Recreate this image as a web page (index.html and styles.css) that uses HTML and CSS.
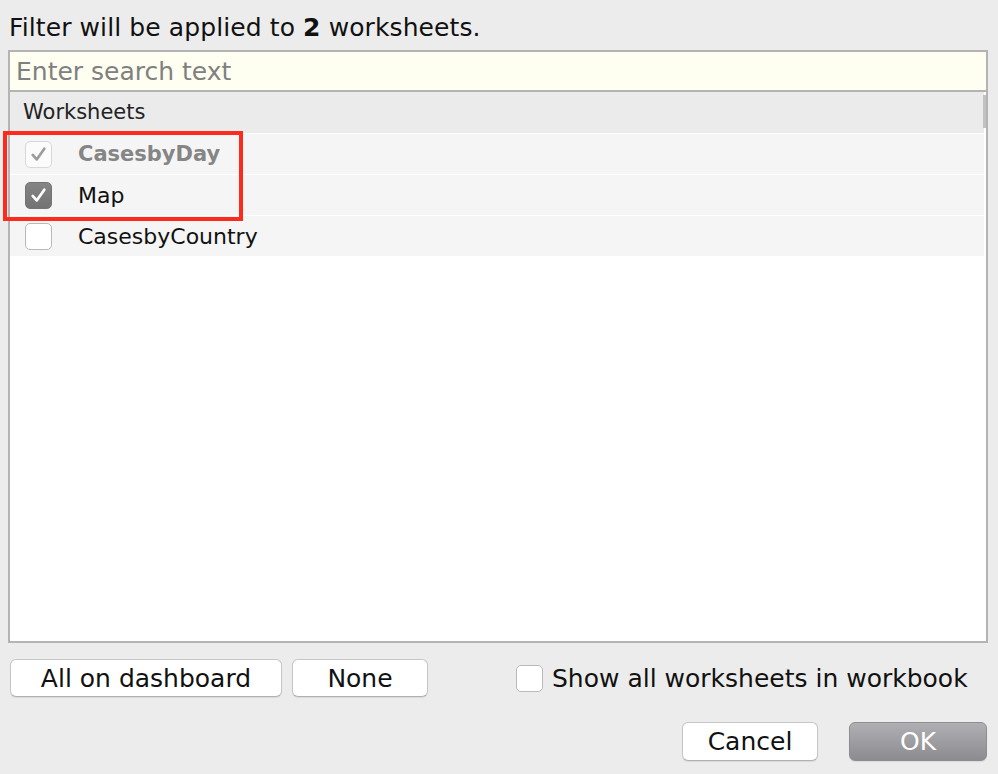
FILE: index.html
```html
<!DOCTYPE html>
<html>
<head>
    <title>Apply to Worksheets</title>
    <link rel="stylesheet" href="styles.css">
</head>
<body>

<div class="dialog">

<p class="summary">Filter will be applied to <b>2</b> worksheets.</p>

<div class="picker">
    <input class="search" type="text" placeholder="Enter search text">
    <div class="list">
        <div class="list-head">
            Worksheets
            <span class="thumb"></span>
        </div>
        <div class="rows">
            <div class="marked"></div>
            <label class="row disabled">
                <span class="box checked-off">
                    <svg viewBox="0 0 28 28"><path d="M7.5 14.5 L12 19.5 L20.5 7.5"/></svg>
                </span>
                <span class="name">CasesbyDay</span>
            </label>
            <label class="row">
                <span class="box checked">
                    <svg viewBox="0 0 28 28"><path d="M7.5 14.5 L12 19.5 L20.5 7.5"/></svg>
                </span>
                <span class="name">Map</span>
            </label>
            <label class="row">
                <span class="box"></span>
                <span class="name">CasesbyCountry</span>
            </label>
        </div>
    </div>
</div>

<div class="tools">
    <button class="btn wide">All on dashboard</button>
    <button class="btn">None</button>
    <label class="show-all">
        <span class="box"></span>
        Show all worksheets in workbook
    </label>
</div>

<div class="actions">
    <button class="btn">Cancel</button>
    <button class="btn default">OK</button>
</div>

</div>

</body>
</html>
```

FILE: styles.css
```css
BODY {
    margin : 0;
    background-color : #ececec;
    font-family : "DejaVu Sans", Verdana, sans-serif;
    color : #111;
}

.dialog {
    width : 998px;
    height : 774px;
    display : flex;
    flex-direction : column;
}

.summary {
    margin : 0;
    padding : 13px 0 0 9px;
    height : 37px;
    font-size : 25px;
    line-height : 30px;
    letter-spacing : 0.1px;
}
.summary B {
    font-weight : bold;
}

/* search field + worksheet list share one frame */
.picker {
    margin-left : 8px;
    width : 980px;
    height : 593px;
    box-sizing : border-box;
    border : 2px solid #b4b4b4;
    display : flex;
    flex-direction : column;
}
.search {
    height : 38px;
    margin : 0;
    padding : 0 0 0 6px;
    border : 0;
    border-bottom : 2px solid #b4b4b4;
    background-color : #fefff0;
    font-family : inherit;
    font-size : 25px;
    outline : none;
}
.search::placeholder {
    color : #808080;
}

.list {
    flex : 1;
    background-color : #fff;
    padding-right : 2px;
    display : flex;
    flex-direction : column;
}
.list-head {
    position : relative;
    height : 41px;
    padding-left : 13px;
    background-color : #ebebeb;
    font-size : 21px;
    line-height : 40px;
    color : #222;
}
.list-head .thumb {
    position : absolute;
    right : -2px;
    top : 3px;
    width : 3px;
    height : 33px;
    background-color : #c2c2c2;
}

.rows {
    position : relative;
    display : flex;
    flex-direction : column;
    gap : 1px;
}
.row {
    height : 40px;
    display : flex;
    align-items : center;
    gap : 26px;
    padding-left : 15px;
    background-color : #f5f5f5;
    font-size : 22px;
}
.row:first-of-type {
    margin-top : 1px;
}
.row.disabled .name {
    color : #858585;
    font-weight : bold;
    font-size : 21px;
}

/* red highlight drawn around the two active worksheets */
.marked {
    position : absolute;
    left : -7px;
    top : -2px;
    width : 240px;
    height : 90px;
    box-sizing : border-box;
    border : 4px solid #fd2b1e;
    pointer-events : none;
}

.box {
    width : 27px;
    height : 27px;
    flex : none;
    box-sizing : border-box;
    border : 1px solid #b9b9b9;
    border-radius : 5px;
    background-color : #fff;
    display : flex;
    align-items : center;
    justify-content : center;
}
.box SVG {
    width : 27px;
    height : 27px;
    fill : none;
    stroke-width : 3;
    stroke-linecap : round;
    stroke-linejoin : round;
}
.box.checked-off {
    border-color : #d8d8d8;
    background-color : #fbfbfb;
}
.box.checked-off SVG {
    stroke : #9c9c9c;
}
.box.checked {
    border-color : #747474;
    background : linear-gradient(#858585, #737373);
}
.box.checked SVG {
    stroke : #fff;
}

.tools {
    margin-top : 16px;
    padding-left : 10px;
    display : flex;
    align-items : center;
    gap : 10px;
}
.btn {
    height : 38px;
    width : 136px;
    margin : 0;
    padding : 0;
    border : 1px solid #c6c6c6;
    border-bottom-color : #b0b0b0;
    border-radius : 6px;
    background-color : #fff;
    box-shadow : 0 1px 1px rgba(0, 0, 0, 0.08);
    font-family : inherit;
    font-size : 25px;
    color : #111;
}
.btn.wide {
    width : 272px;
}
.show-all {
    margin-left : 78px;
    display : flex;
    align-items : center;
    gap : 9px;
    font-size : 25px;
}

.actions {
    margin-top : 25px;
    padding-right : 11px;
    display : flex;
    justify-content : flex-end;
    gap : 31px;
}
.actions .btn {
    height : 39px;
}
.btn.default {
    width : 138px;
    border-color : #8e8e92;
    background : linear-gradient(#b0afb3, #8c8b8f);
    color : #fff;
}
```
